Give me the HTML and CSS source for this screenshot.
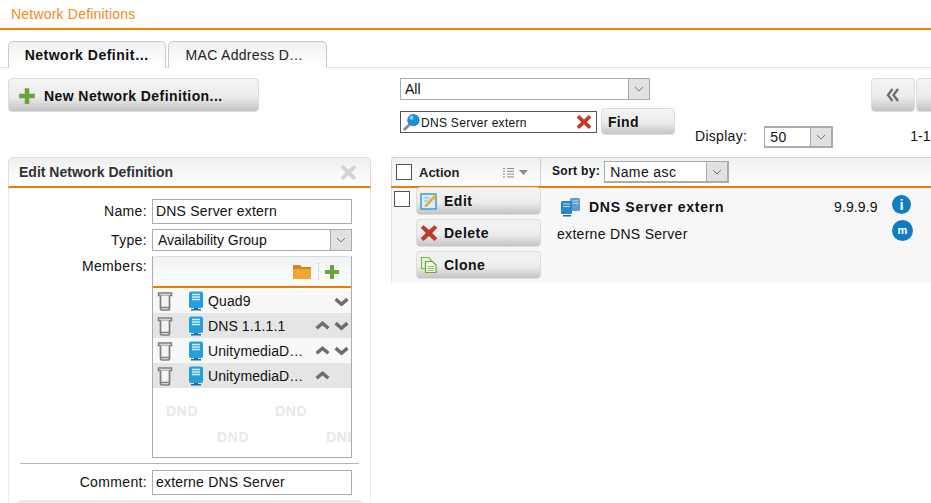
FILE: index.html
```html
<!DOCTYPE html>
<html lang="en">
<head>
<meta charset="utf-8">
<title>Network Definitions</title>
<link rel="stylesheet" href="styles.css">
</head>
<body>
<svg class="defs" width="0" height="0" aria-hidden="true">
  <defs>
    <symbol id="plus" viewBox="0 0 16 16"><path d="M6 1h4v5h5v4h-5v5H6v-5H1V6h5z" fill="#6aa53a"/></symbol>
    <symbol id="x" viewBox="0 0 16 16"><path d="M3.200 1 8 5.400 12.800 1 15.400 3.400 10.800 8l4.600 4.600-2.600 2.400L8 10.600 3.200 15 .6 12.600 5.200 8 .6 3.400z" fill="#c0392b"/></symbol>
    <symbol id="trash" viewBox="0 0 16 20"><path d="M1.500 2h13v2.500h-13z" fill="#f4f4f4" stroke="#7d7d7d" stroke-width="1.500"/><path d="M3.500 4.500v13a1.500 1.500 0 0 0 1.500 1.500h6a1.500 1.500 0 0 0 1.500-1.500v-13" fill="#f4f4f4" stroke="#7d7d7d" stroke-width="1.700"/><path d="M4 16.500h8" stroke="#7d7d7d" stroke-width="1.500"/></symbol>
    <symbol id="server" viewBox="0 0 16 20"><path d="M1 2.500A2 2 0 0 1 3 .5h10a2 2 0 0 1 2 2V15a2 2 0 0 1-2 2H3a2 2 0 0 1-2-2z" fill="#249fdd"/><path d="M4 3.500h8M4 6h8M4 8.500h8" stroke="#d5eefb" stroke-width="1.300"/><path d="M6 17h4v1h3v1.500H3V18h3z" fill="#1a6d9c"/></symbol>
    <symbol id="down" viewBox="0 0 14 10"><path d="M1.500 2.800 7 7.500l5.500-4.700" fill="none" stroke="#6d6d6d" stroke-width="3.200"/></symbol>
    <symbol id="up" viewBox="0 0 14 10"><path d="M1.500 7.500 7 2.800l5.500 4.700" fill="none" stroke="#6d6d6d" stroke-width="3.200"/></symbol>
    <symbol id="chev" viewBox="0 0 10 6"><path d="M1 1l4 4 4-4" fill="none" stroke="#777" stroke-width="1"/></symbol>
  </defs>
</svg>

<header class="title">Network Definitions</header>

<nav class="tabs">
  <div class="tab tab-active">Network Definit…</div>
  <div class="tab">MAC Address D…</div>
</nav>

<div class="main">
  <section class="left">
    <button class="btn btn-new"><svg class="i16"><use href="#plus"/></svg>New Network Definition...</button>

    <div class="panel">
      <div class="panel-head">
        <span>Edit Network Definition</span>
        <svg class="panel-close" viewBox="0 0 16 16"><path d="M3.200 1 8 5.400 12.800 1 15.400 3.400 10.800 8l4.600 4.600-2.600 2.400L8 10.600 3.200 15 .6 12.600 5.200 8 .6 3.400z" fill="#d4d4d4"/></svg>
      </div>
      <div class="panel-body">
        <div class="field field-name">
          <label class="lbl">Name:</label>
          <div class="input">DNS Server extern</div>
        </div>
        <div class="field field-type">
          <label class="lbl">Type:</label>
          <div class="select select-type"><span class="sel-text">Availability Group</span><span class="sel-arrow"><svg class="chev"><use href="#chev"/></svg></span></div>
        </div>
        <div class="field field-members">
          <label class="lbl lbl-members">Members:</label>
          <div class="members">
            <div class="members-head">
              <svg class="folder" viewBox="0 0 20 17"><path d="M1 3a1 1 0 0 1 1-1h6l2 2h8a1 1 0 0 1 1 1v1H1z" fill="#c98a1e"/><path d="M1 6h18v9a1 1 0 0 1-1 1H2a1 1 0 0 1-1-1z" fill="#f2a531"/></svg>
              <span class="dots"></span>
              <svg class="i16 plus-small"><use href="#plus"/></svg>
            </div>
            <div class="mrow">
              <svg class="trash"><use href="#trash"/></svg><svg class="server"><use href="#server"/></svg>
              <span class="mname">Quad9</span>
              <span class="arrows"><span class="slot"></span><svg class="arr"><use href="#down"/></svg></span>
            </div>
            <div class="mrow alt">
              <svg class="trash"><use href="#trash"/></svg><svg class="server"><use href="#server"/></svg>
              <span class="mname">DNS 1.1.1.1</span>
              <span class="arrows"><svg class="arr"><use href="#up"/></svg><svg class="arr"><use href="#down"/></svg></span>
            </div>
            <div class="mrow">
              <svg class="trash"><use href="#trash"/></svg><svg class="server"><use href="#server"/></svg>
              <span class="mname">UnitymediaD…</span>
              <span class="arrows"><svg class="arr"><use href="#up"/></svg><svg class="arr"><use href="#down"/></svg></span>
            </div>
            <div class="mrow alt">
              <svg class="trash"><use href="#trash"/></svg><svg class="server"><use href="#server"/></svg>
              <span class="mname">UnitymediaD…</span>
              <span class="arrows"><svg class="arr"><use href="#up"/></svg><span class="slot"></span></span>
            </div>
            <div class="dnd">
              <div class="dnd-line"><span>DND</span><span>DND</span></div>
              <div class="dnd-line dnd-line2"><span>DND</span><span>DND</span></div>
            </div>
          </div>
        </div>
        <div class="sep"></div>
        <div class="field">
          <label class="lbl">Comment:</label>
          <div class="input">externe DNS Server</div>
        </div>
        <div class="footer-bar"></div>
      </div>
    </div>
  </section>

  <section class="right">
    <div class="top">
      <div class="filters">
        <div class="select select-all"><span class="sel-text">All</span><span class="sel-arrow"><svg class="chev"><use href="#chev"/></svg></span></div>
        <div class="search-row">
          <div class="search">
            <svg class="lens" viewBox="0 0 20 20"><path d="M8 12 2 18" stroke="#8a8a8a" stroke-width="3"/><circle cx="12" cy="7.500" r="6.500" fill="#1c8fdc"/><circle cx="10" cy="5" r="2" fill="#8fd0f5"/></svg>
            <span class="search-text">DNS Server extern</span>
            <svg class="search-x"><use href="#x"/></svg>
          </div>
          <button class="btn btn-find">Find</button>
        </div>
      </div>
      <div class="display">
        <span class="display-lbl">Display:</span>
        <div class="select select-num"><span class="sel-text">50</span><span class="sel-arrow"><svg class="chev"><use href="#chev"/></svg></span></div>
      </div>
      <div class="pager">
        <div class="pager-btns">
          <button class="btn btn-page"><svg class="dbl" viewBox="0 0 14 14"><path d="M6.500 1 2 7l4.500 6M12 1 7.500 7l4.500 6" fill="none" stroke="#6d6d6d" stroke-width="2.400"/></svg></button>
          <button class="btn btn-page"></button>
        </div>
        <div class="count">1-1</div>
      </div>
    </div>

    <div class="listbar">
      <div class="bar-action">
        <span class="check"></span>
        <span class="bar-title">Action</span>
        <svg class="listicon" viewBox="0 0 26 11"><path d="M0 1.500h2M4 1.500h7M0 4.300h2M4 4.300h7M0 7.100h2M4 7.100h7M0 9.900h2M4 9.900h7" stroke="#8a8a8a" stroke-width="1"/><path d="M16 3h9l-4.500 5z" fill="#8a8a8a"/></svg>
      </div>
      <div class="bar-sort">
        <span class="sort-lbl">Sort by:</span>
        <div class="select select-sort"><span class="sel-text">Name asc</span><span class="sel-arrow"><svg class="chev"><use href="#chev"/></svg></span></div>
      </div>
    </div>

    <div class="row">
      <span class="check check-row"></span>
      <div class="actions">
        <button class="btn btn-act"><svg class="i16" viewBox="0 0 18 18"><rect x="1" y="2" width="15" height="15" fill="#d9eefa" stroke="#3d9ad6" stroke-width="1.500"/><path d="M5 13 15 2l2 2L7 14.500 4 15z" fill="#f2a531"/><path d="M4 6h6M4 9h4" stroke="#7fbce3"/></svg>Edit</button>
        <button class="btn btn-act"><svg class="i16"><use href="#x"/></svg>Delete</button>
        <button class="btn btn-act"><svg class="i16" viewBox="0 0 18 18"><path d="M1.500 1.500h7l3 3v8h-10z" fill="#e6f4da" stroke="#7ab648" stroke-width="1.200"/><path d="M5.500 5.500h7l3.500 3.500v7.500H5.500z" fill="#f3fbea" stroke="#6aa53a" stroke-width="1.200"/><path d="M7.500 10.500h6M7.500 12.500h6M7.500 14.500h6" stroke="#8cc063"/></svg>Clone</button>
      </div>
      <div class="detail">
        <div class="detail-head">
          <svg class="servers" viewBox="0 0 22 20"><rect x="10" y="1" width="10" height="13" rx="1.500" fill="#5b9fd0"/><rect x="1" y="4" width="11" height="13" rx="1.500" fill="#2a86c5"/><path d="M3 7h7M3 9.500h7M12.500 4h6M12.500 6.500h6" stroke="#b8dcf2"/><path d="M3 18h8v1.500H3z" fill="#1a6d9c"/></svg>
          <strong>DNS Server extern</strong>
        </div>
        <div class="detail-comment">externe DNS Server</div>
      </div>
      <div class="ip">9.9.9.9</div>
      <div class="badges">
        <span class="badge badge-i">i</span>
        <span class="badge badge-m">m</span>
      </div>
    </div>
  </section>
</div>
</body>
</html>
```

FILE: styles.css
```css
* { box-sizing: border-box; }
html, body { margin: 0; padding: 0; }
body {
  width: 931px;
  height: 503px;
  overflow: hidden;
  background: #fff;
  font-family: "Liberation Sans", Arial, sans-serif;
  font-size: 14px;
  color: #111;
}
.defs { position: absolute; }

.title {
  height: 30px;
  padding: 6px 0 0 11px;
  color: #f28a1c;
  font-size: 14px;
  line-height: 16px;
  letter-spacing: 0.2px;
  border-bottom: 2px solid #ee8400;
}

.tabs {
  display: flex;
  gap: 2px;
  height: 38px;
  padding: 11px 0 0 8px;
  border-bottom: 1px solid #e3e3e3;
}
.tab {
  width: 159px;
  height: 27px;
  padding: 5px 6px 0 0;
  text-align: center;
  font-size: 14px;
  line-height: 17px;
  letter-spacing: 0.3px;
  color: #222;
  border: 1px solid #c9c9c9;
  border-bottom: 0;
  border-radius: 5px 5px 0 0;
  background: linear-gradient(#f0f1f1, #fff);
}
.tab-active { width: 158px; padding-right: 0; font-weight: bold; color: #111; letter-spacing: 0.5px; }

.main { display: flex; }
.left { width: 363px; margin-left: 8px; padding-top: 10px; flex: none; }
.right { margin-left: 20px; flex: none; width: 560px; }

.btn {
  display: flex;
  align-items: center;
  font-family: inherit;
  font-weight: bold;
  font-size: 14px;
  color: #111;
  padding: 0;
  border: 1px solid #dcdcdc;
  border-radius: 4px;
  background: linear-gradient(#f4f4f4 0%, #ececec 55%, #c4c4c4 100%);
}
.i16 { width: 18px; height: 18px; flex: none; }

.btn-new { width: 251px; height: 34px; padding: 1px 0 0 9px; gap: 8px; letter-spacing: 0.42px; }

.panel { margin-top: 45px; }
.panel-head {
  height: 31px;
  display: flex;
  align-items: center;
  justify-content: space-between;
  padding: 0 13px 0 10px;
  font-weight: bold;
  font-size: 14px;
  color: #333;
  border: 1px solid #dedede;
  border-bottom: 2px solid #e87e04;
  border-radius: 5px 5px 0 0;
  background: linear-gradient(#eef0f0, #fff);
}
.panel-close { width: 17px; height: 17px; }
.panel-body {
  height: 330px;
  padding: 11px 0 0 0;
  border-left: 1px dotted #d4d4d4;
  border-right: 1px dotted #d4d4d4;
}

.field { display: flex; align-items: flex-start; gap: 5px; }
.field-type { margin-top: 5px; }
.field-members { margin-top: 5px; }
.lbl { width: 138px; text-align: right; line-height: 25px; flex: none; letter-spacing: 0.35px; }
.field-type .lbl { line-height: 22px; }
.lbl-members { line-height: 21px; }

.input {
  width: 200px;
  height: 25px;
  border: 1px solid #ababab;
  padding-left: 3px;
  line-height: 23px;
  letter-spacing: 0.2px;
}

.select {
  display: flex;
  height: 22px;
  border: 1px solid #ababab;
  background: #fff;
}
.sel-text { flex: 1; line-height: 21px; padding-left: 4px; white-space: nowrap; }
.sel-arrow {
  width: 21px;
  flex: none;
  display: flex;
  align-items: center;
  justify-content: center;
  background: #e1e1e1;
  border-left: 1px solid #ababab;
}
.chev { width: 10px; height: 6px; }
.select-type { width: 200px; }
.select-type .sel-text { padding-left: 5px; }

.members {
  width: 200px;
  height: 202px;
  border: 1px solid #ababab;
  border-top: 0;
  overflow: hidden;
}
.members-head {
  height: 32px;
  display: flex;
  align-items: center;
  justify-content: flex-end;
  padding: 0 12px 0 0;
  margin-left: -1px;
  margin-right: -1px;
  border-bottom: 2px solid #e87e04;
  border-top: 1px solid #dadada;
  border-radius: 5px 5px 0 0;
  background: linear-gradient(#f1f2f2, #fff);
}
.folder { width: 20px; height: 17px; }
.dots { width: 1px; height: 17px; margin: 0 5px 0 6px; border-left: 1px dotted #bbb; }
.plus-small { width: 16px; height: 16px; }

.mrow {
  height: 25px;
  display: flex;
  align-items: center;
  background: #f8f8f8;
  padding-left: 4px;
}
.mrow:nth-child(2) { height: 24px; margin-top: 1px; }
.alt { background: #e5e5e5; }
.trash { width: 16px; height: 20px; flex: none; }
.server { width: 16px; height: 20px; flex: none; margin-left: 15px; }
.mname { margin-left: 4px; width: 107px; white-space: nowrap; letter-spacing: 0.1px; flex: none; }
.arrows { display: flex; gap: 4px; }
.arr { width: 15px; height: 11px; flex: none; }
.slot { width: 15px; height: 11px; }

.dnd {
  padding-top: 14px;
  color: #e8e8e8;
  font-weight: bold;
  font-size: 14px;
  letter-spacing: 0.6px;
}
.dnd-line { display: flex; gap: 77px; padding-left: 13px; height: 26px; line-height: 18px; white-space: nowrap; }
.dnd-line2 { padding-left: 64px; }

.sep { height: 1px; background: #b5b5b5; margin: 5px 11px 6px 11px; }
.footer-bar {
  height: 20px;
  margin: 5px 6px 0 7px;
  background: #ececec;
  border-radius: 5px 5px 0 0;
}

.top { display: flex; height: 90px; padding-top: 10px; }
.filters { width: 284px; margin-left: 9px; flex: none; }
.select-all { width: 250px; }
.search-row { display: flex; gap: 4px; margin-top: 8px; }
.search {
  width: 197px;
  height: 22px;
  margin-top: 3px;
  display: flex;
  align-items: center;
  border: 1px solid #555;
  padding-left: 1px;
}
.lens { width: 19px; height: 19px; flex: none; }
.search-text { font-size: 12px; line-height: 16px; padding-top: 1px; letter-spacing: 0.3px; flex: 1; }
.search-x { width: 16px; height: 16px; margin-right: 4px; flex: none; }
.btn-find { width: 74px; height: 27px; padding-left: 6px; font-size: 14px; letter-spacing: 0.3px; }

.display { display: flex; gap: 17px; margin: 48px 0 0 11px; flex: none; align-items: flex-start; }
.display-lbl { line-height: 21px; letter-spacing: 0.3px; }
.select-num { width: 69px; border-width: 2px 2px 2px 1px; }
.select-num .sel-arrow { border-left-width: 1px; }
.select-num .sel-text { line-height: 19px; padding-left: 5px; letter-spacing: 0.5px; }

.pager { margin-left: 38px; flex: none; width: 80px; }
.pager-btns { display: flex; gap: 1px; }
.btn-page { width: 44px; height: 34px; justify-content: center; flex: none; }
.dbl { width: 14px; height: 14px; }
.count { margin: 13px 0 0 39px; line-height: 22px; }

.listbar {
  display: flex;
  height: 31px;
  margin-top: -1px;
  border-bottom: 2px solid #e87e04;
  border-top: 1px solid #d4d4d4;
  background: linear-gradient(#eff0f0, #fff);
}
.bar-action {
  width: 150px;
  display: flex;
  align-items: center;
  padding-left: 4px;
  border-right: 1px solid #cfcfcf;
  border-left: 1px solid #d8d8d8;
  border-radius: 4px 4px 0 0;
  flex: none;
}
.check {
  width: 16px;
  height: 16px;
  border: 1px solid #555;
  background: #fff;
  flex: none;
}
.bar-title { font-weight: bold; font-size: 13px; margin-left: 7px; color: #222; }
.listicon { width: 26px; height: 11px; margin-left: 44px; }
.bar-sort { display: flex; align-items: flex-start; padding: 3px 0 0 11px; gap: 4px; flex: none; }
.sort-lbl { font-weight: bold; font-size: 12px; line-height: 20px; letter-spacing: 0.35px; }
.select-sort { width: 125px; height: 22px; border: 1px solid #ababab; border-right-width: 2px; border-bottom-width: 2px; }
.select-sort .sel-text { padding-left: 5px; line-height: 20px; letter-spacing: 0.4px; }

.row {
  display: flex;
  height: 95px;
  background: #f7f7f7;
  border-left: 1px solid #e3e3e3;
}
.check-row { margin: 3px 0 0 2px; }
.actions { margin: -1px 0 0 6px; display: flex; flex-direction: column; gap: 4px; flex: none; }
.btn-act { width: 125px; height: 28px; padding-left: 3px; gap: 6px; letter-spacing: 0.5px; }
.detail { margin-left: 16px; width: 277px; flex: none; }
.detail-head { display: flex; align-items: center; gap: 7px; margin: 9px 0 0 3px; height: 20px; }
.detail-head strong { letter-spacing: 0.72px; }
.servers { width: 22px; height: 20px; }
.detail-comment { margin-top: 9px; letter-spacing: 0.3px; }
.ip { margin-top: 10px; line-height: 18px; letter-spacing: 0.1px; width: 58px; flex: none; }
.badges { display: flex; flex-direction: column; gap: 6px; margin-top: 7px; flex: none; }
.badge {
  width: 19px;
  height: 19px;
  border-radius: 50%;
  color: #fff;
  background: #0f7dc2;
  text-align: center;
  font-size: 15px;
  font-weight: bold;
  line-height: 19px;
}
.badge-m { width: 21px; height: 21px; font-size: 11px; line-height: 20px; }
```
